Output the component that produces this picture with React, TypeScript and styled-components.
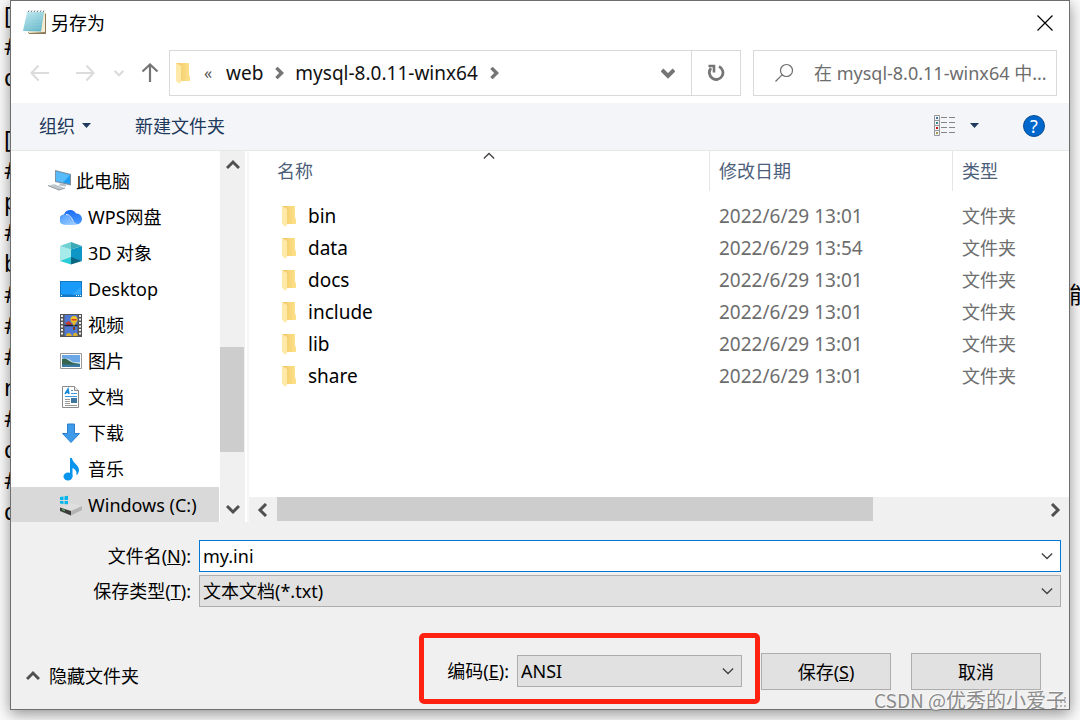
import React from "react";
import styled, { createGlobalStyle } from "styled-components";

const GlobalStyle = createGlobalStyle`
  * { box-sizing: border-box; }
  body {
    margin: 0;
    background: #fbfbfb;
    color: #000;
    font: 18px/24px "Noto Sans", "Noto Sans CJK SC", sans-serif;
  }
  button, input, select { font: inherit; color: inherit; border-radius: 0; }
  svg { display: block; flex: none; }
`;

const Page = styled.div`
  position: relative;
  min-height: 100vh;
  padding: 0 10px 10px;
  overflow: hidden;
`;

/* Text editor that shows at the edges behind the dialog */
const Editor = styled.div`
  position: absolute;
  inset: 0 -12px 0 4px;
  font-size: 23px;
  line-height: 31px;
`;

const EditorLine = styled.div`
  display: flex;
  justify-content: space-between;
  height: 31px;
`;

const Dialog = styled.form`
  position: relative;
  display: flex;
  flex-direction: column;
  min-height: calc(100vh - 10px);
  border: 1px solid #6e6e6e;
  background: #f0f0f0;
  box-shadow: 0 4px 14px rgba(0, 0, 0, 0.42);
`;

const TitleBar = styled.header`
  display: flex;
  align-items: center;
  height: 43px;
  padding-left: 12px;
  background: #fff;
`;

const Title = styled.h1`
  flex: 1;
  margin: 0 0 0 4px;
  font-size: 18px;
  font-weight: 400;
  line-height: 22px;
`;

const PlainButton = styled.button<{ $width?: number }>`
  display: flex;
  align-items: center;
  justify-content: center;
  flex: none;
  width: ${({ $width }) => ($width ? `${$width}px` : "auto")};
  height: 43px;
  padding: 0;
  border: 0;
  background: transparent;
`;

const NavRow = styled.nav`
  display: flex;
  align-items: flex-start;
  height: 59px;
  padding: 6px 12px 0 6px;
  background: #fff;
`;

const NavButtons = styled.div`
  display: flex;
  align-items: center;
  height: 46px;
`;

const AddressBar = styled.div`
  display: flex;
  align-items: center;
  flex: 1;
  min-width: 0;
  height: 46px;
  padding-left: 6px;
  border: 1px solid #d9d9d9;
  font-size: 19px;
`;

const Crumbs = styled.div`
  display: flex;
  align-items: center;
  flex: 1;
  gap: 10px;
  padding-left: 14px;
`;

const CrumbsMore = styled.span`
  width: 12px;
  color: #555;
  font-size: 16px;
`;

const Crumb = styled.a`
  color: #111;
  text-decoration: none;
`;

const RefreshCell = styled.div`
  height: 44px;
  border-left: 1px solid #d9d9d9;
`;

const SearchBox = styled.label`
  display: flex;
  align-items: center;
  gap: 18px;
  width: 304px;
  height: 46px;
  margin-left: 12px;
  padding-left: 21px;
  border: 1px solid #d9d9d9;
`;

const SearchInput = styled.input`
  flex: 1;
  min-width: 0;
  padding: 0;
  border: 0;
  outline: 0;
  background: transparent;
  &::placeholder { color: #6d6d6d; opacity: 1; }
`;

const Toolbar = styled.div`
  display: flex;
  align-items: center;
  justify-content: space-between;
  height: 48px;
  padding: 0 24px 2px 28px;
  border-bottom: 1px solid #e6e7e9;
  background: #f4f5f8;
  color: #1e395b;
`;

const ToolButton = styled(PlainButton)<{ $gap?: number }>`
  gap: ${({ $gap }) => $gap ?? 7}px;
`;

const ToolGroup = styled.div`
  display: flex;
  align-items: center;
  gap: 44px;
`;

const Main = styled.main`
  display: flex;
  flex: 1 1 371px;
  min-height: 0;
  background: #fff;
`;

const Sidebar = styled.aside`
  display: flex;
  width: 235px;
  height: 371px;
  border-right: 1px solid #fff;
  background: #fff;
`;

const Tree = styled.ul`
  flex: 1;
  margin: 0;
  padding: 12px 0 0;
  overflow: hidden;
  list-style: none;
`;

const TreeItem = styled.li<{ $root?: boolean; $selected?: boolean }>`
  display: flex;
  align-items: center;
  gap: 4px;
  height: 36px;
  margin-right: 1px;
  padding-left: ${({ $root }) => ($root ? 37 : 49)}px;
  background: ${({ $selected }) => ($selected ? "#d9d9d9" : "transparent")};
  white-space: nowrap;
`;

const VScroll = styled.div`
  display: flex;
  flex-direction: column;
  width: 25px;
  background: #f0f0f0;
`;

const VTrack = styled.div`
  flex: 1;
  padding-top: 168px;
`;

const VThumb = styled.div`
  width: 24px;
  height: 105px;
  background: #cdcdcd;
`;

const ScrollButton = styled.button<{ $width?: number; $height?: number }>`
  display: flex;
  align-items: center;
  justify-content: center;
  flex: none;
  width: ${({ $width = 25 }) => $width}px;
  height: ${({ $height = 25 }) => $height}px;
  padding: 0;
  border: 0;
  background: transparent;
`;

const FilePane = styled.section`
  display: flex;
  flex: 1;
  flex-direction: column;
  min-width: 0;
  margin-left: 1px;
  border-left: 2px solid #f7f7f7;
`;

const TableArea = styled.div`
  position: relative;
  flex: 1;
`;

const SortMark = styled.span`
  position: absolute;
  top: -1px;
  right: 574px;
`;

const FileTable = styled.table`
  width: 100%;
  table-layout: fixed;
  border-collapse: separate;
  border-spacing: 0;
  color: #6d6d6d;

  th {
    height: 40px;
    padding: 0 0 0 9px;
    border-left: 1px solid #e5e5e5;
    color: #4c607a;
    font-weight: 400;
    text-align: left;
  }
  th:first-child { padding-left: 28px; border-left: 0; }
  td {
    height: 32px;
    padding: 0 0 0 10px;
    white-space: nowrap;
  }
  td:first-child { padding-left: 33px; color: #000; }
  tbody::before { content: ""; display: block; height: 9px; }
`;

const DateCell = styled.td`
  font-size: 19px;
`;

const FileName = styled.span`
  display: flex;
  align-items: center;
  gap: 12px;
  font-size: 19px;
`;

const HScroll = styled.div`
  display: flex;
  align-items: flex-start;
  height: 25px;
  background: #f0f0f0;
`;

const HTrack = styled.div`
  flex: 1;
`;

const HThumb = styled.div`
  width: 78%;
  height: 24px;
  background: #cdcdcd;
`;

const Fields = styled.div`
  display: grid;
  grid-template-columns: 180px 1fr;
  align-items: center;
  gap: 3px 8px;
  padding: 18px 8px 0 0;
`;

const FieldLabel = styled.label`
  text-align: right;
  white-space: nowrap;
`;

const Combo = styled.div<{ $active?: boolean; $width?: number }>`
  position: relative;
  display: flex;
  align-items: center;
  width: ${({ $width }) => ($width ? `${$width}px` : "auto")};
  height: 32px;
  border: 1px solid ${({ $active }) => ($active ? "#0078d7" : "#adadad")};
  background: ${({ $active }) => ($active ? "#fff" : "#e1e1e1")};
`;

const NameInput = styled.input`
  flex: 1;
  min-width: 0;
  padding: 0 3px;
  border: 0;
  outline: 0;
  background: transparent;
`;

const Select = styled.select`
  flex: 1;
  height: 30px;
  padding: 0 3px;
  border: 0;
  outline: 0;
  appearance: none;
  background: transparent;
`;

const ComboArrow = styled.span`
  position: absolute;
  right: 7px;
  pointer-events: none;
`;

const Footer = styled.footer`
  display: flex;
  align-items: flex-start;
  padding: 26px 28px 5px 15px;
`;

const HideFolders = styled(PlainButton)`
  gap: 9px;
  margin: 21px auto 0 0;
`;

const Encoding = styled.div`
  display: flex;
  gap: 8px;
  align-items: center;
  height: 71px;
  padding: 5px 13px 0 23px;
  border: 5px solid #ff2213;
  border-radius: 5px;
`;

const PushButton = styled.button<{ $gap: number }>`
  width: 130px;
  height: 37px;
  margin: 20px 0 0 ${({ $gap }) => $gap}px;
  padding: 0;
  border: 1px solid #adadad;
  background: #e1e1e1;
`;

const Grip = styled.span`
  position: absolute;
  right: 3px;
  bottom: 2px;
`;

const Watermark = styled.div`
  position: absolute;
  right: 14px;
  bottom: 6px;
  color: #8c8c8c;
  font: 20px/28px "Noto Sans CJK SC", sans-serif;
  text-shadow: -1px -1px 0 rgba(255, 255, 255, 0.8);
`;

const WatermarkSite = styled.span`
  font-size: 19px;
`;

type Dir = "up" | "down" | "left" | "right";
const chevrons: Record<Dir, string> = {
  up: "M1 10 L7 4 L13 10",
  down: "M1 4 L7 10 L13 4",
  left: "M10 1 L4 7 L10 13",
  right: "M4 1 L10 7 L4 13",
};

function Chevron({ dir, size = 14, weight = 2, color = "#505050" }: { dir: Dir; size?: number; weight?: number; color?: string }) {
  return (
    <svg width={size} height={size} viewBox="0 0 14 14" fill="none" stroke={color} strokeWidth={weight}>
      <path d={chevrons[dir]} />
    </svg>
  );
}

const ThinChevron = ({ dir }: { dir: Dir }) => <Chevron dir={dir} size={12} weight={1.5} color="#404040" />;

function Arrow({ dir, color }: { dir: "left" | "right" | "up"; color: string }) {
  const turn = { left: 0, up: 90, right: 180 }[dir];
  return (
    <svg width="20" height="20" viewBox="0 0 20 20" fill="none" stroke={color} strokeWidth="2.200">
      <path transform={`rotate(${turn} 10 10)`} d="M19 10H1.500M8.500 2.500L1.500 10l7 7.500" />
    </svg>
  );
}

const Caret = () => (
  <svg width="9" height="5" viewBox="0 0 9 5" fill="#1e395b"><path d="M0 0h9L4.500 5z" /></svg>
);

const Folder = () => (
  <svg width="14" height="22" viewBox="0 0 14 22">
    <defs>
      <linearGradient id="folderBack" x1="0" x2="1"><stop stopColor="#f0c864" /><stop offset="1" stopColor="#fee28c" /></linearGradient>
    </defs>
    <path d="M0 1h13v12l1 1v5H4z" fill="url(#folderBack)" />
    <path d="M0 1l5 3v15l-1 3-4-3z" fill="#ffe9a9" />
  </svg>
);

const Notepad = () => (
  <svg width="24" height="25" viewBox="0 0 24 25">
    <defs>
      <linearGradient id="pad" x1="0" y1="0" x2=".6" y2="1"><stop stopColor="#c9edf3" /><stop offset="1" stopColor="#68b9cb" /></linearGradient>
    </defs>
    <path d="M5 22h17V3l1 1v20H6z" fill="#8d7a58" />
    <path d="M4 3l18-1v20l-16 1z" fill="#f4ecd0" />
    <path d="M4 2h17l-3 19.500L0 21z" fill="url(#pad)" />
    <path d="M5 2l1-1.500M8 2l1-1.500M11 2l1-1.500M14 2l1-1.500M17 2l1-1.500M20 2l1-1.500" stroke="#596b70" />
    <path d="M4.500 6h15M4 9h15M3.500 12h15M3 15h15M2.500 18h15" stroke="#9ad3df" strokeWidth=".6" />
  </svg>
);

const Refresh = () => (
  <svg width="18" height="18" viewBox="0 0 18 18" fill="none" stroke="#767676">
    <path d="M12 2.500A6.800 6.800 0 1 1 4 4.200" strokeWidth="2.800" />
    <path d="M1.500 2H7v6.500" strokeWidth="2.600" />
  </svg>
);

const SearchGlass = () => (
  <svg width="21" height="20" viewBox="0 0 21 20" fill="none" stroke="#6d6d6d" strokeWidth="1.200">
    <circle cx="11.500" cy="7.500" r="6" /><path d="M7.300 11.700L.5 18.500" />
  </svg>
);

const ViewMode = () => (
  <svg width="22" height="22" viewBox="0 0 22 22" fill="none">
    <path d="M.5.5h5v20h-5zM.5 5.500h5M.5 10.500h5M.5 15.500h5" stroke="#969696" />
    <path d="M2 2h2v2H2z" fill="#4579a0" /><path d="M2 7h2v2H2z" fill="#3b8590" />
    <path d="M2 12h2v2H2z" fill="#c90f0f" /><path d="M2 17h2v2H2z" fill="#a09a50" />
    <path d="M7 2.500h6M15 2.500h6M7 7.500h6M15 7.500h6M7 12.500h6M15 12.500h6M7 17.500h6M15 17.500h6" stroke="#858585" />
  </svg>
);

const HelpBadge = styled.span`
  display: block;
  width: 22px;
  height: 22px;
  border: 1px solid #0a4f94;
  border-radius: 50%;
  background: #0067cc;
  color: #fff;
  font-size: 18px;
  line-height: 20px;
  text-align: center;
`;

const icons: Record<string, React.ReactNode> = {
  pc: (
    <>
      <path d="M7 0l16 4v11.500L7 12z" fill="#7d93a5" /><path d="M8 1.500l14 3.500v9L8 11z" fill="#1f9df5" />
      <path d="M8 1.500l14 3.500-7 7.500-7-1.500z" fill="#58bcfb" />
      <path d="M12 13l6 1.500v2l-7-1z" fill="#b8c1c8" />
      <path d="M0 15.500l6-1.500 11 4-6 2.500z" fill="#d4d9dd" /><path d="M0 15.500l11 4.500 6-2" stroke="#8e99a1" fill="none" />
      <path d="M3 15.500l9 3.500M5.500 15l9 3" stroke="#a4afb6" strokeWidth=".7" />
    </>
  ),
  cloud: (
    <>
      <defs>
        <linearGradient id="cloudTop" x1="0" x2="0" y1="0" y2="1"><stop stopColor="#1a6cf2" /><stop offset="1" stopColor="#4b9cff" /></linearGradient>
        <linearGradient id="cloudFront" x1="0" x2="1" y1="0" y2="1"><stop stopColor="#4b9bff" /><stop offset="1" stopColor="#a3d2ff" /></linearGradient>
      </defs>
      <path d="M5 18.500a5 5 0 0 1-1-10A6.500 6.500 0 0 1 16 7.500a5.500 5.500 0 0 1 1 11z" fill="url(#cloudTop)" />
      <path d="M5 18.500a5 5 0 0 1 0-10c4 0 5.500 3.500 7.500 7 1 1.800 2.500 3 4.500 3z" fill="url(#cloudFront)" />
      <path d="M6 8.500c4 0 5.500 3.500 7.300 7 .8 1.500 1.700 2.300 3.200 2.800" stroke="#fff" strokeWidth=".9" fill="none" />
    </>
  ),
  cube: (
    <>
      <path d="M0 4l11 3.500v9L0 19z" fill="#a6ebe9" /><path d="M22 4L11 7.500v9L22 19z" fill="#0d96c6" />
      <path d="M0 4l11-4v7.500z" fill="#6ed0d3" /><path d="M11 0l11 4-11 3.500z" fill="#3ba9b8" />
      <path d="M0 19l11-4v7.500z" fill="#2bcbd8" /><path d="M11 15l11 4-11 3.500z" fill="#0b6683" />
    </>
  ),
  desktop: (
    <>
      <path d="M0 3h22v16H0z" fill="#1278c5" /><path d="M1 4h20v12.500H1z" fill="#1a9bfa" />
      <path d="M21 4v5l-9 7.500h9z" fill="#35a8ff" /><path d="M1 17.500h1M16 17.500h1M18 17.500h1M20 17.500h1" stroke="#fff" />
    </>
  ),
  video: (
    <>
      <path d="M0 0h22v23H0z" fill="#555" /><path d="M4.500 1h13v21h-13z" fill="#4f78d2" />
      <path d="M2 1v21M20 1v21" stroke="#eee" strokeWidth="2" strokeDasharray="2 1.500" />
      <circle cx="14" cy="5.500" r="3.500" fill="#f0c427" /><path d="M11.500 5h5v1.500h-5z" fill="#d43d26" />
      <path d="M5 9l4-2 3 3-3 2z" fill="#c43b32" /><path d="M4.500 11.500h13" stroke="#222" strokeWidth="1.500" />
      <path d="M12 9h4l-2 3z" fill="#eab320" /><path d="M13 13h2v3h-2z" fill="#7a3b20" />
      <path d="M6 22c0-4 5-4 6 0zM13 22c0-4 4-4 4.500-1v1z" fill="#ddb129" />
    </>
  ),
  picture: (
    <>
      <path d="M.5 3.500h21v15H.5z" fill="#fff" stroke="#999" /><path d="M2 5h18v12H2z" fill="#6da8e6" />
      <path d="M2 8l7 1 4 3h7v5H2z" fill="#bcd8ea" /><path d="M2 9c4-2 6 2 12 4l6 1v1H2z" fill="#36654f" /><path d="M2 14.500h18V17H2z" fill="#3878a2" />
    </>
  ),
  doc: (
    <>
      <path d="M2.500.5h12l4 4v17h-16z" fill="#fff" stroke="#8b8b8b" /><path d="M14.500.5v4h4" fill="#eee" stroke="#8b8b8b" />
      <path d="M5 8l3-5 1 5M6 6.500h3" stroke="#1589d8" strokeWidth="1.500" fill="none" />
      <path d="M11 4.500h2M11 7.500h6M5 10.500h12" stroke="#3b9be0" /><path d="M5 13.500h5M5 15.500h5M5 17.500h5M5 19.500h12" stroke="#9a9a9a" />
      <path d="M11 12h6v5h-6z" fill="#3f76a0" />
    </>
  ),
  download: <path d="M7.500 2h7v9.500h5L11 20.500l-8.500-9h5z" fill="#3f9bea" stroke="#2a7fd0" />,
  music: (
    <>
      <ellipse cx="8" cy="18.500" rx="4.500" ry="4" fill="#0a95ec" />
      <path d="M10 18.500V0h2c.5 5 7 7 7 12 0 2-1 4-2.500 5.500.5-4.500-1.500-6.500-4-7.500v8.500z" fill="#0a95ec" />
    </>
  ),
  drive: (
    <>
      <path d="M0 3l3.500-.5V6H0zM4.500 2.300L8 1.800V6H4.500zM0 7h3.500v3L0 9.500zM4.500 7H8v3.500l-3.500-.5z" fill="#08b6ee" />
      <path d="M0 13.500l11-4.500 11 3-11 5z" fill="#dedede" /><path d="M0 13.500l11 3.500v4.500L0 17z" fill="#3d3d3d" />
      <path d="M11 17l11-5v4l-11 5.500z" fill="#b4b4b4" /><path d="M2 15.500l3 1" stroke="#50d060" />
    </>
  ),
};

const treeItems = [
  { icon: "pc", label: "此电脑", root: true },
  { icon: "cloud", label: "WPS网盘" },
  { icon: "cube", label: "3D 对象" },
  { icon: "desktop", label: "Desktop" },
  { icon: "video", label: "视频" },
  { icon: "picture", label: "图片" },
  { icon: "doc", label: "文档" },
  { icon: "download", label: "下载" },
  { icon: "music", label: "音乐" },
  { icon: "drive", label: "Windows (C:)", selected: true },
];

const folders = [
  ["bin", "2022/6/29 13:01"],
  ["data", "2022/6/29 13:54"],
  ["docs", "2022/6/29 13:01"],
  ["include", "2022/6/29 13:01"],
  ["lib", "2022/6/29 13:01"],
  ["share", "2022/6/29 13:01"],
];

const editorLines = ["[", "#", "d", "", "[", "#", "p", "#", "b", "#", "#", "#", "n", "#", "d", "#", "d"];

export default function App() {
  return (
    <Page>
      <GlobalStyle />
      <Editor aria-hidden="true">
        {editorLines.map((text, i) => (
          <EditorLine key={i}>
            <span>{text}</span>
            {i === 9 && <span>能</span>}
          </EditorLine>
        ))}
      </Editor>
      <Dialog onSubmit={(e) => e.preventDefault()}>
        <TitleBar>
          <Notepad />
          <Title>另存为</Title>
          <PlainButton type="button" $width={48} aria-label="关闭">
            <svg width="16" height="16" viewBox="0 0 16 16" stroke="#000" strokeWidth="1.200"><path d="M.5.5l15 15M15.500.5l-15 15" /></svg>
          </PlainButton>
        </TitleBar>
        <NavRow>
          <NavButtons>
            <PlainButton type="button" $width={46} aria-label="后退"><Arrow dir="left" color="#dcdcdc" /></PlainButton>
            <PlainButton type="button" $width={44} aria-label="前进"><Arrow dir="right" color="#dcdcdc" /></PlainButton>
            <PlainButton type="button" $width={24} aria-label="最近位置"><Chevron dir="down" size={10} weight={3} color="#dcdcdc" /></PlainButton>
            <PlainButton type="button" $width={38} aria-label="上移"><Arrow dir="up" color="#757575" /></PlainButton>
          </NavButtons>
          <AddressBar>
            <Folder />
            <Crumbs>
              <CrumbsMore>«</CrumbsMore>
              <Crumb href="#web">web</Crumb>
              <Chevron dir="right" size={12} weight={4} color="#757575" />
              <Crumb href="#mysql">mysql-8.0.11-winx64</Crumb>
              <Chevron dir="right" size={12} weight={4} color="#757575" />
            </Crumbs>
            <PlainButton type="button" $width={46} aria-label="展开"><Chevron dir="down" weight={4} color="#757575" /></PlainButton>
            <RefreshCell><PlainButton type="button" $width={48} aria-label="刷新"><Refresh /></PlainButton></RefreshCell>
          </AddressBar>
          <SearchBox>
            <SearchGlass />
            <SearchInput aria-label="搜索" placeholder="在 mysql-8.0.11-winx64 中..." />
          </SearchBox>
        </NavRow>
        <Toolbar>
          <ToolGroup>
            <ToolButton type="button">组织<Caret /></ToolButton>
            <ToolButton type="button">新建文件夹</ToolButton>
          </ToolGroup>
          <ToolGroup>
            <ToolButton type="button" $gap={14} aria-label="视图"><ViewMode /><Caret /></ToolButton>
            <ToolButton type="button" aria-label="帮助"><HelpBadge>?</HelpBadge></ToolButton>
          </ToolGroup>
        </Toolbar>
        <Main>
          <Sidebar>
            <Tree>
              {treeItems.map((item) => (
                <TreeItem key={item.icon} $root={item.root} $selected={item.selected}>
                  <svg width="24" height="23" viewBox="0 0 24 23">{icons[item.icon]}</svg>
                  {item.label}
                </TreeItem>
              ))}
            </Tree>
            <VScroll>
              <ScrollButton type="button" $height={28} aria-label="向上滚动"><Chevron dir="up" weight={3} /></ScrollButton>
              <VTrack><VThumb /></VTrack>
              <ScrollButton type="button" $height={27} aria-label="向下滚动"><Chevron dir="down" weight={3} /></ScrollButton>
            </VScroll>
          </Sidebar>
          <FilePane>
            <TableArea>
              <SortMark><ThinChevron dir="up" /></SortMark>
              <FileTable>
                <colgroup><col /><col width="243" /><col width="117" /></colgroup>
                <thead><tr><th>名称</th><th>修改日期</th><th>类型</th></tr></thead>
                <tbody>
                  {folders.map(([name, date]) => (
                    <tr key={name}>
                      <td><FileName><Folder />{name}</FileName></td>
                      <DateCell>{date}</DateCell>
                      <td>文件夹</td>
                    </tr>
                  ))}
                </tbody>
              </FileTable>
            </TableArea>
            <HScroll>
              <ScrollButton type="button" $width={28} aria-label="向左滚动"><Chevron dir="left" weight={3} /></ScrollButton>
              <HTrack><HThumb /></HTrack>
              <ScrollButton type="button" $width={28} aria-label="向右滚动"><Chevron dir="right" weight={3} /></ScrollButton>
            </HScroll>
          </FilePane>
        </Main>
        <Fields>
          <FieldLabel htmlFor="file-name">文件名(<u>N</u>):</FieldLabel>
          <Combo $active>
            <NameInput id="file-name" defaultValue="my.ini" />
            <ComboArrow><ThinChevron dir="down" /></ComboArrow>
          </Combo>
          <FieldLabel htmlFor="file-type">保存类型(<u>T</u>):</FieldLabel>
          <Combo>
            <Select id="file-type"><option>文本文档(*.txt)</option></Select>
            <ComboArrow><ThinChevron dir="down" /></ComboArrow>
          </Combo>
        </Fields>
        <Footer>
          <HideFolders type="button"><Chevron dir="up" weight={3} />隐藏文件夹</HideFolders>
          <Encoding>
            <FieldLabel htmlFor="encoding">编码(<u>E</u>):</FieldLabel>
            <Combo $width={225}>
              <Select id="encoding"><option>ANSI</option></Select>
              <ComboArrow><ThinChevron dir="down" /></ComboArrow>
            </Combo>
          </Encoding>
          <PushButton type="submit" $gap={1}>保存(<u>S</u>)</PushButton>
          <PushButton type="button" $gap={20}>取消</PushButton>
        </Footer>
        <Grip>
          <svg width="10" height="10" viewBox="0 0 10 10" fill="#b5b5b5"><path d="M8 0h2v2H8zM4 4h2v2H4zM8 4h2v2H8zM0 8h2v2H0zM4 8h2v2H4zM8 8h2v2H8z" /></svg>
        </Grip>
      </Dialog>
      <Watermark><WatermarkSite>CSDN @</WatermarkSite>优秀的小爱子</Watermark>
    </Page>
  );
}
